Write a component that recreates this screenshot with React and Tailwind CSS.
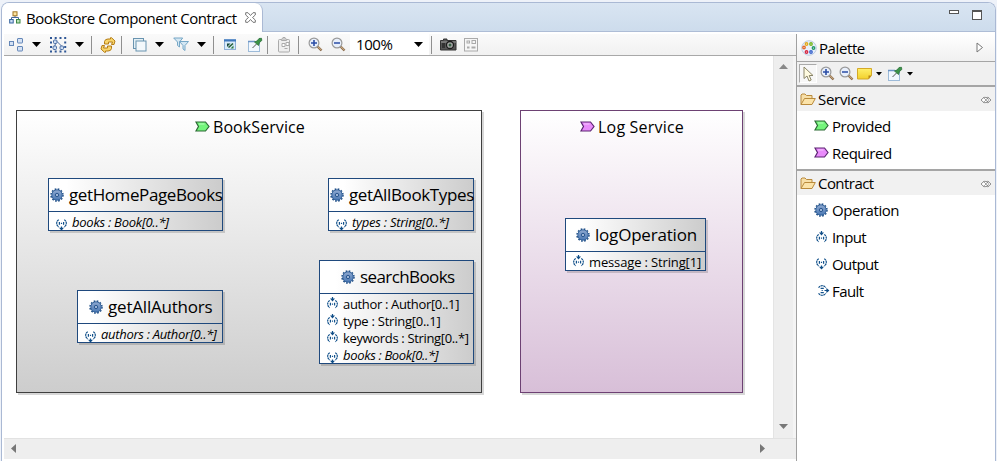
import React from "react";

const Gear = () => (
  <svg width="14" height="14" viewBox="0 0 14 14" className="shrink-0">
    <defs>
      <linearGradient id="gear" x1="0" y1="0" x2="0" y2="1">
        <stop offset="0" stopColor="#8fa9d0" />
        <stop offset="1" stopColor="#4a78b4" />
      </linearGradient>
    </defs>
    <circle cx="7" cy="7" r="6" fill="none" stroke="#1f4e86" strokeWidth="1.5" strokeDasharray="1.7 1.442" />
    <circle cx="7" cy="7" r="5.2" fill="url(#gear)" stroke="#2c5c96" strokeWidth=".9" />
    <circle cx="7" cy="7" r="1.7" fill="#9db4d6" stroke="#2a5890" strokeWidth="1" />
  </svg>
);

const Input = () => (
  <svg width="12" height="12" viewBox="0 0 12 12" className="shrink-0" fill="none" stroke="#13528c" strokeWidth="1.200">
    <path d="M5.500 0v3" />
    <path d="M3 1.600h5L5.500 4.400z" fill="#0f4c85" stroke="none" />
    <path d="M2.800 3.500Q.7 4.600.7 7t2.100 3.800M8.200 3.500q2.100 1.100 2.100 3.500t-2.100 3.800" strokeDasharray="2.200 .5" />
    <path d="M3.400 5.700v2.800M7.600 5.700v2.800M4.900 7.100h1.200" />
  </svg>
);

const Output = () => (
  <svg width="12" height="12" viewBox="0 0 12 12" className="shrink-0" fill="none" stroke="#13528c" strokeWidth="1.200">
    <path d="M5.500 7.500v3" />
    <path d="M3 8.700h5l-2.500 2.900z" fill="#0f4c85" stroke="none" />
    <path d="M2.800.7Q.7 1.800.7 4.200T2.800 8M8.200.7q2.100 1.100 2.100 3.500T8.200 8" strokeDasharray="2.200 .5" />
    <path d="M3.400 2.900v2.800M7.600 2.900v2.800M4.900 4.300h1.200" />
  </svg>
);

const Fault = () => (
  <svg width="12" height="12" viewBox="0 0 12 12" className="shrink-0" fill="none" stroke="#13528c" strokeWidth="1.200">
    <path d="M.6 2.800Q1.700.7 4.200.7T7.800 2.800M.6 8.200q1.100 2.100 3.600 2.100t3.600-2.100" strokeDasharray="2.200 .5" />
    <path d="M2.600 3.400h3.200M2.600 7.600h3.200M4.200 4.900v1.200M6.500 5.500h3" />
    <path d="M8.400 3v5l3-2.500z" fill="#0f4c85" stroke="none" />
  </svg>
);

const Chevron = ({ green }) => (
  <svg width="15" height="12" viewBox="0 0 15 12" className="shrink-0">
    <path
      d="M1 1h9.500L14 5.500 10.500 10H1l2.500-4.500z"
      fill={green ? "#74f57c" : "#e98bfb"}
      stroke={green ? "#2c6b35" : "#5c2573"}
      strokeWidth="1.200"
    />
    <path d="M4 3h5.500" stroke={green ? "#b9ffbd" : "#f6c4ff"} />
  </svg>
);

const Magnifier = ({ plus }) => (
  <svg width="15" height="15" viewBox="0 0 15 15" className="shrink-0">
    <path d="M9.500 9.500l4 4" stroke="#8a6a4a" strokeWidth="2.400" />
    <path d="M9.500 9.200l3.600 3.700" stroke="#d9b98c" strokeWidth="1" />
    <circle cx="6" cy="6" r="4.900" fill="#e8effb" stroke="#9a9a9a" strokeWidth="1.200" />
    <path d={plus ? "M3 6h6M6 3v6" : "M3 6h6"} stroke="#2a4da6" strokeWidth="1.600" />
  </svg>
);

const Caret = ({ small }) =>
  small ? (
    <svg width="6" height="4" viewBox="0 0 6 4" className="shrink-0"><path d="M0 0h6L3 3.500z" /></svg>
  ) : (
    <svg width="9" height="5" viewBox="0 0 9 5" className="shrink-0"><path d="M0 0h9L4.500 5z" /></svg>
  );

const Folder = () => (
  <svg width="16" height="13" viewBox="0 0 16 13" className="shrink-0">
    <path d="M1 11.500V2l1-1h3l1.500 1.500H12V5" fill="#f7dfa8" stroke="#b98a3c" />
    <path d="M1 11.500L4.500 5.500h10.800L12 11.500z" fill="#fbe3a9" stroke="#b98a3c" strokeLinejoin="round" />
  </svg>
);

const Pin = () => (
  <svg width="16" height="16" viewBox="0 0 16 16" className="shrink-0">
    <rect x="1.500" y="4.500" width="11" height="10" fill="#f2f8ff" stroke="#9dbbd9" />
    <path d="M1 4.500h7" stroke="#6c95c8" strokeWidth="1.500" />
    <path d="M5.500 11l4-4" stroke="#555" />
    <path d="M7.500 5L10 4l2-2.500 2.500-.2.300 2.200-2.300 2L11.500 8.500z" fill="#3a9448" stroke="#2b6e38" strokeWidth=".8" />
  </svg>
);

const Note = () => (
  <svg width="16" height="12" viewBox="0 0 16 12" className="shrink-0">
    <defs>
      <linearGradient id="note" x1="0" y1="0" x2="0" y2="1">
        <stop offset="0" stopColor="#fff06a" />
        <stop offset="1" stopColor="#f2d02c" />
      </linearGradient>
    </defs>
    <path d="M.5.5h14v7l-3 3.500H.5z" fill="url(#note)" stroke="#d5a927" />
    <path d="M14.500 7.500h-3V11z" fill="#b98512" />
  </svg>
);

const Separator = () => <div className="h-[18px] w-px shrink-0 bg-[#8f8f8f]" />;

const Collapse = () => (
  <svg width="12" height="8" viewBox="0 0 12 8" className="mt-px shrink-0" fill="#fff" stroke="#777" strokeWidth=".8">
    <path d="M4.200 1L1 4l3.200 3V5.500L6 7l3-3-3-3-1.800 1.500z" />
    <path d="M7.800 1L11 4 7.800 7V5.500L5 4l2.800-1.500z" fillOpacity=".4" />
  </svg>
);

function Toolbar() {
  return (
    <div className="ml-0.5 flex h-[22px] shrink-0 items-center border-b border-[#a8a8a8] bg-gradient-to-b from-[#fafafa] to-[#f1f1f1]">
      <svg width="15" height="14" viewBox="0 0 15 14" className="ml-[5px]" fill="#d5e2f4" stroke="#6487b8">
        <rect x=".5" y="3.500" width="4" height="4" /><rect x="8.500" y=".5" width="5" height="4.500" rx=".5" /><rect x="8.500" y="8.500" width="5" height="4.500" rx=".5" />
      </svg>
      <div className="ml-2"><Caret /></div>
      <svg width="17" height="16" viewBox="0 0 17 16" className="ml-[9px]" fill="none" stroke="#4c6fa5">
        <g fill="#2f5796" stroke="none">
          <path d="M0 0h2v2H0zM4.700 0h2v2h-2zM9.500 0h2v2h-2zM14.200 0h2v2h-2zM0 4.500h2v2H0zM14.200 4.500h2v2h-2zM0 9h2v2H0zM14.200 9h2v2h-2zM0 13.500h2v2H0zM4.700 13.500h2v2h-2zM9.500 13.500h2v2h-2zM14.200 13.500h2v2h-2z" />
        </g>
        <rect x="3.500" y="3" width="3.500" height="3.500" rx="1" fill="#cdddf2" /><rect x="3" y="9" width="3.500" height="3.500" rx="1" fill="#cdddf2" /><rect x="10" y="9" width="3.500" height="3.500" rx="1" fill="#cdddf2" />
        <path d="M7 4.500l4.500 4.500M5.500 6.500L4.800 9" />
      </svg>
      <div className="ml-[8px]"><Caret /></div>
      <div className="ml-[7px]"><Separator /></div>
      <svg width="16" height="16" viewBox="0 0 16 16" className="ml-[8px]" fill="#f8d56a" stroke="#b57d17" strokeLinejoin="round">
        <path d="M4.500 7V4.500Q5 2 8 2h2.500V.7h1L15 4l-1 3.500h-2.500L12.500 5H8.500v2z" />
        <path d="M11.500 9v2.500Q11 14 8 14H5.500v1.300h-1L1 12l1-3.500h2.500L3.500 11h4V9z" />
      </svg>
      <div className="ml-[5px]"><Separator /></div>
      <svg width="14" height="14" viewBox="0 0 14 14" className="ml-[11px]" stroke="#6994b0">
        <rect x=".5" y=".5" width="10" height="10" fill="#e5f0f5" /><rect x="3" y="3" width="10" height="10" fill="#f3f8fb" />
      </svg>
      <div className="ml-[8px]"><Caret /></div>
      <svg width="16" height="15" viewBox="0 0 16 15" className="ml-[9px]" fill="#d4e7f3" stroke="#76a7c6">
        <path d="M.7 1h9L6.500 5v5l-2-1.500V5z" /><path d="M6.500 4.500h9L12 8.500v5l-2-1.500V8.500z" />
      </svg>
      <div className="ml-[8px]"><Caret /></div>
      <div className="ml-[7px]"><Separator /></div>
      <svg width="13" height="12" viewBox="0 0 13 12" className="ml-[10px]">
        <rect x=".5" y=".5" width="11" height="10" fill="#d8eafa" stroke="#8fb0d8" /><path d="M0 1.500h12" stroke="#3f78bd" strokeWidth="2" />
        <path d="M3 4.500h3.500L3 8z" fill="#184a3b" /><path d="M9.500 9.500H6.500L9.500 6.500z" fill="#2a7b42" /><path d="M4.500 8.500l4.500-4" stroke="#28613a" strokeWidth="1.600" />
      </svg>
      <div className="ml-[10px]"><Pin /></div>
      <div className="ml-[4px]"><Separator /></div>
      <svg width="13" height="16" viewBox="0 0 13 16" className="ml-[10px]" fill="#eee" stroke="#aaa">
        <rect x=".5" y="2.500" width="11" height="12.500" rx="1" /><path d="M3.500 2.500L5 .5h2l1.500 2v1h-5z" fill="#ccc" /><path d="M4 6.500h3v3H4zM8 5.500h3v3H8zM6.500 11.500h3" fill="#fff" />
      </svg>
      <div className="ml-[7px]"><Separator /></div>
      <div className="ml-[9px]"><Magnifier plus /></div>
      <div className="ml-2"><Magnifier /></div>
      <div className="ml-1 flex h-[21px] w-[79px] items-center bg-white pl-[6px]">
        <span className="w-[58px] text-[15px] tracking-[-0.4px]">100%</span>
        <Caret />
      </div>
      <div className="ml-[2px]"><Separator /></div>
      <svg width="17" height="13" viewBox="0 0 17 13" className="ml-[8px]">
        <path d="M.5 2.500h3V1H7v1.500h9V12H.5z" fill="#555" stroke="#333" /><path d="M1 4h15" stroke="#999" />
        <circle cx="10" cy="7" r="3.500" fill="#aaa" stroke="#1b1b1b" strokeWidth="1.300" /><circle cx="10" cy="7" r="1.500" fill="#365f43" /><rect x="2" y="5" width="3" height="5" fill="#333" />
      </svg>
      <svg width="14" height="14" viewBox="0 0 14 14" className="ml-[7px]" fill="#f6f6f6" stroke="#aaa">
        <rect x=".5" y=".5" width="13" height="12.500" /><rect x="3" y="3" width="2.500" height="2" /><rect x="8" y="2.500" width="3.500" height="3" /><path d="M3 9.500h2.500M7.500 9.500h4" strokeWidth="2" />
      </svg>
    </div>
  );
}

const Attr = ({ out, children, spacing }) => (
  <div className={"flex h-[17px] items-center whitespace-nowrap text-[13px] leading-[17px] " + spacing + (out ? " italic" : "")}>
    <div className={out ? "mr-1 mt-1" : "mb-1 mr-1"}>{out ? <Output /> : <Input />}</div>
    {children}
  </div>
);

function Operation({ box, head, title, titleSpacing, body, children }) {
  return (
    <div className={"absolute border border-[#1f497d] bg-gradient-to-r from-white from-10% to-[#cccccc] shadow-[2px_2px_0_#00000028] " + box}>
      <div className={"flex h-[33px] items-center whitespace-nowrap border-b border-[#1f497d] text-[17px] " + head}>
        <Gear />
        <span className={"ml-[5px] " + titleSpacing}>{title}</span>
      </div>
      <div className={"pt-[2px] " + body}>{children}</div>
    </div>
  );
}

function Canvas() {
  return (
    <div className="relative min-w-0 flex-1 overflow-hidden bg-white">
      <div className="absolute left-[12px] top-[54px] h-[283px] w-[466px] border border-[#3f3f3f] bg-gradient-to-b from-white to-[#cdcdcd] shadow-[2px_2px_0_#00000028]">
        <div className="mt-[4px] flex h-6 items-center pl-[178px] text-[16px]">
          <Chevron green />
          <span className="ml-[3px] tracking-[0.08px]">BookService</span>
        </div>
      </div>
      <div className="absolute left-[516px] top-[54px] h-[283px] w-[223px] border border-[#6d4173] bg-gradient-to-b from-white to-[#d8bfd8] shadow-[2px_2px_0_#00000028]">
        <div className="mt-[4px] flex h-6 items-center pl-[59px] text-[16px]">
          <Chevron />
          <span className="ml-[3px] tracking-[0.2px]">Log Service</span>
        </div>
      </div>
      <Operation box="left-[44px] top-[122px] h-[53px] w-[175px]" head="pl-px" title="getHomePageBooks" titleSpacing="tracking-[-0.4px]" body="pl-[7px]">
        <Attr out spacing="tracking-[-0.25px]">books : Book[0..*]</Attr>
      </Operation>
      <Operation box="left-[324px] top-[122px] h-[53px] w-[146px]" head="pl-px" title="getAllBookTypes" titleSpacing="tracking-[-0.37px]" body="pl-[7px]">
        <Attr out spacing="tracking-[-0.25px]">types : String[0..*]</Attr>
      </Operation>
      <Operation box="left-[315px] top-[204px] h-[104px] w-[155px]" head="pl-[21px]" title="searchBooks" titleSpacing="tracking-[-0.6px]" body="pl-[7px]">
        <Attr spacing="tracking-[-0.34px]">author : Author[0..1]</Attr>
        <Attr spacing="tracking-[-0.25px]">type : String[0..1]</Attr>
        <Attr spacing="tracking-[-0.34px]">keywords : String[0..*]</Attr>
        <Attr out spacing="tracking-[-0.34px]">books : Book[0..*]</Attr>
      </Operation>
      <Operation box="left-[73px] top-[234px] h-[53px] w-[146px]" head="pl-[11px]" title="getAllAuthors" titleSpacing="tracking-[-0.2px]" body="pl-[7px]">
        <Attr out spacing="tracking-[-0.3px]">authors : Author[0..*]</Attr>
      </Operation>
      <Operation box="left-[561px] top-[162px] h-[53px] w-[141px]" head="pl-[10px]" title="logOperation" titleSpacing="tracking-[-0.2px]" body="pl-[7px]">
        <Attr spacing="tracking-[-0.14px]">message : String[1]</Attr>
      </Operation>
    </div>
  );
}

const PaletteHeader = ({ label, spacing }) => (
  <div className="flex h-[26px] items-center border-t-2 border-[#a5a5a5] bg-[#f1f1f1] pl-[3px] pr-[3px] text-[15px]">
    <Folder />
    <span className={"ml-[2px] flex-1 " + spacing}>{label}</span>
    <Collapse />
  </div>
);

const Tool = ({ icon, label, spacing }) => (
  <div className="flex h-[27px] items-center pl-[17px] text-[15px]">
    <div className="mb-[2px] flex w-[18px] items-center">{icon}</div>
    <span className={spacing}>{label}</span>
  </div>
);

function Palette() {
  return (
    <div className="flex w-[199px] shrink-0 flex-col border-l border-[#a0a0a0] bg-white">
      <div className="flex h-[28px] items-center border-b border-[#a5a5a5] bg-gradient-to-b from-white to-[#f0f0f0] pl-1 text-[15px]">
        <svg width="16" height="16" viewBox="0 0 16 16">
          <circle cx="8" cy="8" r="7.300" fill="#e9f0fa" stroke="#bccce2" />
          <g fill="#fff" strokeWidth="1.400">
            <circle cx="5.500" cy="4" r="1.200" stroke="#e2a91c" /><circle cx="10" cy="4" r="1.200" stroke="#75b620" /><circle cx="3" cy="7.500" r="1.200" stroke="#e3692d" />
            <circle cx="12.500" cy="8" r="1.200" stroke="#24986a" /><circle cx="5.500" cy="12" r="1.200" stroke="#d62942" /><circle cx="10" cy="12" r="1.200" stroke="#3863cc" />
          </g>
        </svg>
        <span className="ml-[2px] flex-1 pt-0.5 tracking-[-0.4px]">Palette</span>
        <svg width="8" height="11" viewBox="0 0 8 11" className="mr-[11px]" fill="#fff" stroke="#777"><path d="M1 1v9l5.500-4.500z" /></svg>
      </div>
      <div className="flex h-[23px] items-center bg-[#f0f0f0] pl-[2px]">
        <div className="flex h-[19px] w-[18px] items-center justify-center border border-b-white border-l-[#aaa] border-r-white border-t-[#aaa] bg-[#f7f7f7]">
          <svg width="11" height="16" viewBox="0 0 11 16" fill="#fffbe0" stroke="#8a8568"><path d="M1 1v11.500l3-2.500 2 5 2.200-1-2-4.500H10z" /></svg>
        </div>
        <div className="ml-[3px]"><Magnifier plus /></div>
        <div className="ml-1"><Magnifier /></div>
        <div className="ml-[3px]"><Note /></div>
        <div className="ml-[3px]"><Caret small /></div>
        <div className="ml-[5px]"><Pin /></div>
        <div className="ml-[4px]"><Caret small /></div>
      </div>
      <PaletteHeader label="Service" spacing="tracking-[-0.3px]" />
      <div className="h-[58px] pt-[2px]">
        <Tool icon={<Chevron green />} label="Provided" spacing="tracking-[-0.45px]" />
        <Tool icon={<Chevron />} label="Required" spacing="tracking-[-0.5px]" />
      </div>
      <PaletteHeader label="Contract" spacing="tracking-[-0.55px]" />
      <div className="pt-[2px]">
        <Tool icon={<Gear />} label="Operation" spacing="tracking-[-0.45px]" />
        <Tool icon={<div className="ml-0.5"><Input /></div>} label="Input" spacing="tracking-[-0.6px]" />
        <Tool icon={<div className="ml-0.5"><Output /></div>} label="Output" spacing="tracking-[-0.6px]" />
        <Tool icon={<div className="ml-1"><Fault /></div>} label="Fault" spacing="tracking-[-0.6px]" />
      </div>
    </div>
  );
}

export default function App() {
  return (
    <div className="flex h-[461px] w-[997px] flex-col overflow-hidden bg-[#eef2f9] pl-px pr-px pt-0.5 font-['Open_Sans','Noto_Sans',sans-serif] text-black">
      <div className="flex min-h-0 flex-1 flex-col overflow-hidden rounded-t-lg border border-b-0 border-[#aab9d4] bg-white">
        <div className="flex h-[29px] shrink-0 border-b border-[#aebdd6] bg-gradient-to-b from-[#d9e5f2] to-[#cddcec]">
          <div className="-mb-px flex w-[261px] items-center rounded-tr-lg border-r border-[#aab9d4] bg-white pl-[7px]">
            <svg width="12" height="13" viewBox="0 0 12 13" strokeWidth="1">
              <path d="M6 4v3M2.500 9V6.500h7V9" fill="none" stroke="#44679c" />
              <rect x="4" y=".8" width="4" height="4" fill="#fce5a1" stroke="#a07422" /><rect x=".7" y="8.500" width="3.500" height="3.500" fill="#c8dcf5" stroke="#35639c" /><rect x="7.500" y="8.500" width="3.500" height="3.500" fill="#b8e0b5" stroke="#3d8644" />
            </svg>
            <span className="ml-[5px] w-[219px] whitespace-nowrap pt-0.5 text-[15px] tracking-[-0.45px]">BookStore Component Contract</span>
            <svg width="11" height="11" viewBox="0 0 11 11" fill="#fff" stroke="#777"><path d="M.7.7H3l2.500 2.800L8 .7h2.300V3L7.500 5.500 10.300 8v2.300H8L5.500 7.500 3 10.300H.7V8l2.800-2.500L.7 3z" /></svg>
          </div>
          <div className="flex flex-1 justify-end gap-[13px] pr-[13px] pt-[7px]">
            <div className="h-1 w-2.5 border border-[#555] bg-white" />
            <div className="h-2.5 w-2.5 border border-t-2 border-[#555] bg-white" />
          </div>
        </div>
        <div className="flex min-h-0 flex-1 pt-0.5">
          <div className="flex min-w-0 flex-1 flex-col">
            <Toolbar />
            <div className="flex min-h-0 flex-1 pl-[2px]">
              <Canvas />
              <div className="flex w-5 shrink-0 flex-col items-center justify-between border-l border-[#e4e4e4] bg-[#eeeeee] pb-[8px] pt-2">
                <svg width="9" height="6" viewBox="0 0 9 6" fill="#888"><path d="M0 5h9L4.500 0z" /></svg>
                <svg width="9" height="6" viewBox="0 0 9 6" fill="#777"><path d="M0 0h9L4.500 5z" /></svg>
              </div>
              <div className="w-[3px] shrink-0 bg-[#f4f4f4]" />
            </div>
            <div className="ml-0.5 flex h-[23px] shrink-0 justify-between border-b-2 border-t border-b-white border-t-[#e2e2e2] bg-[#eeeeee] pl-[7px] pr-[30px] pt-[5px]">
              <svg width="6" height="9" viewBox="0 0 6 9" fill="#777"><path d="M5 0v9L0 4.500z" /></svg>
              <svg width="6" height="9" viewBox="0 0 6 9" fill="#777"><path d="M0 0v9l5-4.500z" /></svg>
            </div>
          </div>
          <Palette />
        </div>
      </div>
    </div>
  );
}
